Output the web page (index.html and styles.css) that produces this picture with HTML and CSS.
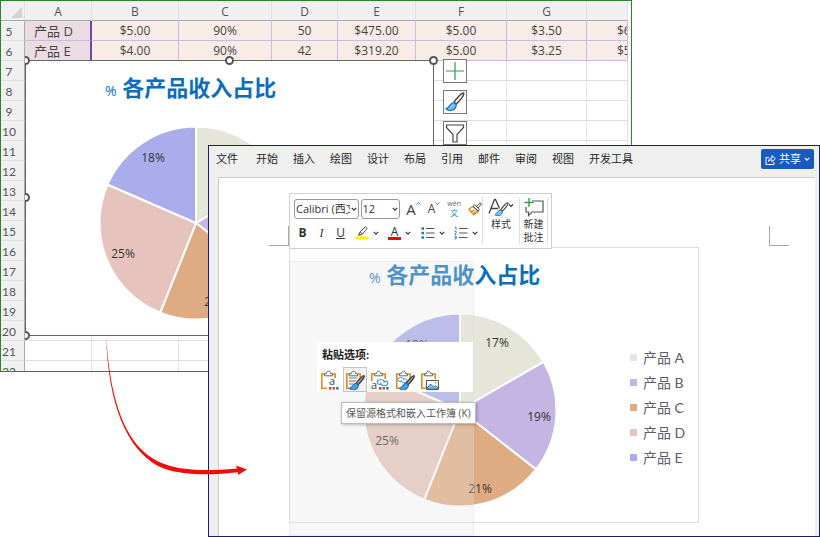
FILE: index.html
```html
<!DOCTYPE html>
<html lang="zh-CN">
<head>
<meta charset="utf-8">
<meta name="viewport" content="width=device-width, initial-scale=1">
<title>各产品收入占比</title>
<link rel="stylesheet" href="styles.css">
</head>
<body>
<svg class="defs" aria-hidden="true">
  <symbol id="chev" viewBox="0 0 6 6"><path d="M.8 1.8 3 4.2 5.2 1.8" fill="none" stroke="#333" stroke-width="1.1"/></symbol>
  <symbol id="brush" viewBox="0 0 18 18">
    <path d="M16.800 1c-1.400-.6-6.600 4.800-8.600 8.200l1.800 1.700c3.300-3 8-8.700 6.800-9.900z" fill="#fff" stroke="#444" stroke-width="1.300"/>
    <path d="M8 9.500c-3.200-.2-3.400 3.800-7 5.700 2.600 2.300 8.600 1.800 9.200-3.800z" fill="#83beec" stroke="#1e74bd" stroke-width="1.200"/>
  </symbol>
  <symbol id="brushfill" viewBox="0 0 18 18">
    <path d="M17 .8c-1.400-.6-6.800 5-8.800 8.400l2 1.900c3.300-3 8-9 6.800-10.300z" fill="#999" stroke="#3a3a3a" stroke-width="1.400"/>
    <path d="M8 9.300c-3.400-.2-3.400 4-7.200 5.900 2.600 2.500 9.200 2 9.800-3.600z" fill="#4aa0e0" stroke="#1e74bd" stroke-width="1.200"/>
  </symbol>
  <symbol id="clip" viewBox="0 0 18 20">
    <path d="M4 4H1.800v14.200H7M13 4h2.200v5" fill="none" stroke="#e08a1e" stroke-width="1.600"/>
    <path d="M4.500 5.800V3.600h2C6.500 .4 10.500 .4 10.500 3.600h2v2.200z" fill="#fff" stroke="#666" stroke-width="1"/>
  </symbol>
  <symbol id="link" viewBox="0 0 14 9">
    <path d="M6 6.500H3.800a2.500 2.500 0 0 1 0-5h2.400a2.500 2.500 0 0 1 2.300 3.400M8 3h2.200a2.400 2.400 0 0 1 0 4.800H7.800a2.400 2.400 0 0 1-2.300-3.300" fill="none" stroke="#3d97d3" stroke-width="1.200"/>
  </symbol>
  <symbol id="dots" viewBox="0 0 10 3">
    <path d="M0 0h2.400v2.600H0z" fill="#d83b2a"/><path d="M3.600 0H6v2.600H3.600z" fill="#e0461f"/><path d="M7.200 0h2.400v2.600H7.200z" fill="#1e74bd"/>
  </symbol>
  <symbol id="slices" viewBox="-98 -98 196 196">
    <g stroke="#fff" stroke-width="2" stroke-linejoin="round">
      <path d="M0 0V-96.500A96.500 96.500 0 0 1 83.600-48.200Z" fill="#e6e5d9"/>
      <path d="M0 0 83.600-48.200A96.500 96.500 0 0 1 76 59.400Z" fill="#c4b5e3"/>
      <path d="M0 0 76 59.400A96.500 96.500 0 0 1-35.800 89.600Z" fill="#dfab83"/>
      <path d="M0 0-35.800 89.600A96.500 96.500 0 0 1-88.500-38.500Z" fill="#e6c4bd"/>
      <path d="M0 0-88.500-38.500A96.500 96.500 0 0 1 0-96.500Z" fill="#aaaceb"/>
    </g>
  </symbol>
</svg>

<main class="desktop">
  <section class="excel" aria-label="工作表">
    <table class="grid">
      <colgroup><col class="c-num"><col class="c-a"><col class="c-b"><col class="c-c"><col class="c-d"><col class="c-e"><col class="c-f"><col class="c-g"><col></colgroup>
      <thead>
        <tr><th class="corner"><svg width="11" height="11" viewBox="0 0 11 11"><path d="M11 0v11H0z" fill="#d2d2d2"/></svg></th><th>A</th><th>B</th><th>C</th><th>D</th><th>E</th><th>F</th><th>G</th><th></th></tr>
      </thead>
      <tbody>
        <tr class="data"><th>5</th><td class="name">产品 D</td><td>$5.00</td><td>90%</td><td>50</td><td>$475.00</td><td>$5.00</td><td>$3.50</td><td class="cut">$665.00</td></tr>
        <tr class="data"><th>6</th><td class="name last">产品 E</td><td>$4.00</td><td>90%</td><td>42</td><td>$319.20</td><td>$5.00</td><td>$3.25</td><td class="cut">$518.70</td></tr>
        <tr><th>7</th><td></td><td></td><td></td><td></td><td></td><td></td><td></td><td></td></tr>
        <tr><th>8</th><td></td><td></td><td></td><td></td><td></td><td></td><td></td><td></td></tr>
        <tr><th>9</th><td></td><td></td><td></td><td></td><td></td><td></td><td></td><td></td></tr>
        <tr><th>10</th><td></td><td></td><td></td><td></td><td></td><td></td><td></td><td></td></tr>
        <tr><th>11</th><td></td><td></td><td></td><td></td><td></td><td></td><td></td><td></td></tr>
        <tr><th>12</th><td></td><td></td><td></td><td></td><td></td><td></td><td></td><td></td></tr>
        <tr><th>13</th><td></td><td></td><td></td><td></td><td></td><td></td><td></td><td></td></tr>
        <tr><th>14</th><td></td><td></td><td></td><td></td><td></td><td></td><td></td><td></td></tr>
        <tr><th>15</th><td></td><td></td><td></td><td></td><td></td><td></td><td></td><td></td></tr>
        <tr><th>16</th><td></td><td></td><td></td><td></td><td></td><td></td><td></td><td></td></tr>
        <tr><th>17</th><td></td><td></td><td></td><td></td><td></td><td></td><td></td><td></td></tr>
        <tr><th>18</th><td></td><td></td><td></td><td></td><td></td><td></td><td></td><td></td></tr>
        <tr><th>19</th><td></td><td></td><td></td><td></td><td></td><td></td><td></td><td></td></tr>
        <tr><th>20</th><td></td><td></td><td></td><td></td><td></td><td></td><td></td><td></td></tr>
        <tr><th>21</th><td></td><td></td><td></td><td></td><td></td><td></td><td></td><td></td></tr>
        <tr><th>22</th><td></td><td></td><td></td><td></td><td></td><td></td><td></td><td></td></tr>
      </tbody>
    </table>

    <div class="objects">
      <div class="selected-chart">
        <figure class="chart">
          <figcaption><span class="pct">%</span> 各产品收入占比</figcaption>
          <svg class="pie" width="196" height="196" viewBox="-98 -98 196 196">
            <use href="#slices" x="-98" y="-98" width="196" height="196"/>
            <text x="-43" y="-61">18%</text><text x="-73" y="35">25%</text><text x="20" y="83">21%</text>
          </svg>
        </figure>
        <i class="handle tl"></i><i class="handle tm"></i><i class="handle tr"></i><i class="handle ml"></i><i class="handle bl"></i>
        <div class="side">
          <button type="button" aria-label="图表元素"><svg width="20" height="20" viewBox="0 0 20 20"><path d="M10 1v18M1 10h18" stroke="#2e9e57" stroke-width="1.200"/></svg></button>
          <button type="button" aria-label="图表样式"><svg width="20" height="20"><use href="#brush"/></svg></button>
          <button type="button" aria-label="图表筛选器"><svg width="20" height="20" viewBox="0 0 20 20"><path d="M1.500 2h17v2.500L12 11.500V19H8v-7.500L1.500 4.500z" fill="none" stroke="#444" stroke-width="1.200"/></svg></button>
        </div>
      </div>
    </div>
  </section>

  <section class="word" aria-label="文档">
    <nav class="tabs">
      <a href="#" class="file">文件</a><a href="#">开始</a><a href="#">插入</a><a href="#">绘图</a><a href="#">设计</a><a href="#">布局</a><a href="#">引用</a><a href="#">邮件</a><a href="#">审阅</a><a href="#">视图</a><a href="#">开发工具</a>
      <button type="button" class="share">
        <svg width="11" height="11" viewBox="0 0 11 11"><path d="M4 3.500H1v7h8V8M3.500 7.500C3.800 5 5 4 7 4V1.500L10.300 4.800 7 8V5.800C5.500 5.800 4.500 6.300 3.500 7.500z" fill="none" stroke="#fff"/></svg>
        共享
        <svg width="6" height="6" viewBox="0 0 6 6"><path d="M.8 1.800 3 4.200 5.200 1.800" fill="none" stroke="#fff" stroke-width="1.200"/></svg>
      </button>
    </nav>
    <div class="canvas">
      <article class="page">
        <i class="mark mark-l"></i><i class="mark mark-r"></i>
        <figure class="chart framed">
          <figcaption><span class="pct">%</span> 各产品收入占比</figcaption>
          <div class="plot">
            <svg class="pie" width="196" height="196" viewBox="-98 -98 196 196">
              <use href="#slices" x="-98" y="-98" width="196" height="196"/>
              <text x="37" y="-63">17%</text><text x="79" y="11">19%</text><text x="20" y="83">21%</text><text x="-73" y="35">25%</text><text x="-43" y="-61">18%</text>
            </svg>
            <ul class="legend"><li class="a">产品 A</li><li class="b">产品 B</li><li class="c">产品 C</li><li class="d">产品 D</li><li class="e">产品 E</li></ul>
          </div>
        </figure>
        <div class="veil"></div>

        <div class="mini" role="toolbar" aria-label="浮动工具栏">
          <div class="format">
            <div class="line">
              <span class="combo font"><select aria-label="字体"><option>Calibri (西文正文)</option></select><svg width="6" height="6"><use href="#chev"/></svg></span>
              <span class="combo size"><select aria-label="字号"><option>12</option></select><svg width="6" height="6"><use href="#chev"/></svg></span>
              <div class="tools">
                <button type="button" class="grow" aria-label="增大字号">A<svg width="5" height="5" viewBox="0 0 5 5"><path d="M.5 3.500l2-2 2 2" fill="none" stroke="#2b88d0"/></svg></button>
                <button type="button" class="grow small" aria-label="减小字号">A<svg width="5" height="5" viewBox="0 0 5 5"><path d="M.5 1.500l2 2 2-2" fill="none" stroke="#2b88d0"/></svg></button>
                <button type="button" class="wen" aria-label="拼音指南"><span>wén</span><span class="zh">文</span></button>
                <button type="button" aria-label="格式刷"><svg width="14" height="14" viewBox="0 0 14 14"><path d="M5 4.500.800 7.200 5.800 13l4.400-3.600z" fill="#fff" stroke="#e0831c" stroke-width="1.200"/><path d="M3 9.500l3.500-1.200M4.800 11.500l3.800-2" stroke="#e0831c" stroke-width="1.400"/><path d="M5.200 4.200l1.600-1.500 4.600 4.900-1.400 1.500zM8.500 4.300l3.600-3.600 1.300 1.300-3.300 3.900z" fill="#fff" stroke="#444"/></svg></button>
              </div>
            </div>
            <div class="line second">
              <button type="button" class="ch bold" aria-label="加粗">B</button>
              <button type="button" class="ch ital" aria-label="倾斜">I</button>
              <button type="button" class="ch under" aria-label="下划线">U</button>
              <button type="button" class="drop" aria-label="突出显示"><svg width="14" height="14" viewBox="0 0 14 14"><path d="M3.500 9 5 5.800 10.500 .8l1.700 1.500L7.500 8zM5 5.800 7.500 8M3.500 9l2.500-.300" fill="#fff" stroke="#555"/><path d="M.5 10.500h13V13.500H.5z" fill="#fff200"/></svg><svg width="6" height="6"><use href="#chev"/></svg></button>
              <button type="button" class="drop" aria-label="字体颜色"><span class="fc">A</span><svg width="6" height="6"><use href="#chev"/></svg></button>
              <button type="button" class="drop" aria-label="项目符号"><svg width="14" height="14" viewBox="0 0 14 14"><path d="M5 2.500h8.500M5 7h8.500M5 11.500h8.500" stroke="#555"/><path d="M.5 1.200h2.500v2.500H.5zM.5 5.700h2.500v2.500H.5zM.5 10.200h2.500v2.500H.5z" fill="#1e74bd"/></svg><svg width="6" height="6"><use href="#chev"/></svg></button>
              <button type="button" class="drop" aria-label="编号"><svg width="14" height="14" viewBox="0 0 14 14"><path d="M5 2.500h8.500M5 7h8.500M5 11.500h8.500" stroke="#555"/><path d="M1 1.200h1v2.800M.6 5.500h1.600v1.200l-1.400 1.500h1.600M.6 10h1.600v3H.6M1 11.500h1.200" fill="none" stroke="#1e74bd" stroke-width=".9"/></svg><svg width="6" height="6"><use href="#chev"/></svg></button>
            </div>
          </div>
          <button type="button" class="big styles"><svg width="26" height="20" viewBox="0 0 26 20"><path d="M1 15.500 6.500 1.500h1l4 9M3 10.500H10" fill="none" stroke="#444" stroke-width="1.300"/><use href="#brush" x="6" y="4" width="15" height="15"/><path d="M21 6.500l2 2 2-2" fill="none" stroke="#333" stroke-width="1.100"/></svg>样式</button>
          <button type="button" class="big note"><svg width="20" height="20" viewBox="0 0 20 20"><path d="M8 3h11v11H8l-3.500 3.500V14H2V9" fill="none" stroke="#555" stroke-width="1.200"/><path d="M5 0v9M.5 4.500h9" stroke="#27a348" stroke-width="1.400"/></svg>新建<br>批注</button>
        </div>

        <div class="paste" role="menu">
          <strong>粘贴选项:</strong>
          <div class="choices">
            <button type="button" aria-label="使用目标主题和嵌入工作簿"><svg width="20" height="20" viewBox="0 0 20 20"><use href="#clip" width="18" height="20"/><path d="M8 8h12v12H8z" fill="#fff"/><text x="9" y="15" class="ia">a</text><use href="#dots" x="9" y="17" width="10" height="3"/></svg></button>
            <button type="button" class="on" aria-label="保留源格式和嵌入工作簿"><svg width="20" height="20" viewBox="0 0 20 20"><use href="#clip" width="18" height="20"/><path d="M4 8h8M4 14h4" stroke="#3d97d3"/><path d="M4 11h7" stroke="#e0461f"/><use href="#brushfill" x="4" y="5" width="16" height="16"/></svg></button>
            <button type="button" aria-label="使用目标主题和链接数据"><svg width="20" height="20" viewBox="0 0 20 20"><use href="#clip" width="18" height="20"/><path d="M0 11h20v9H0z" fill="#fff"/><use href="#link" x="6" y="8" width="13" height="9"/><text x="1" y="19" class="ia">a</text><use href="#dots" x="9" y="17" width="10" height="3"/></svg></button>
            <button type="button" aria-label="保留源格式和链接数据"><svg width="20" height="20" viewBox="0 0 20 20"><use href="#clip" width="18" height="20"/><use href="#link" x="2" y="6" width="11" height="8"/><use href="#brushfill" x="4" y="5" width="16" height="16"/></svg></button>
            <button type="button" aria-label="图片"><svg width="20" height="20" viewBox="0 0 20 20"><use href="#clip" width="18" height="20"/><path d="M6.500 10.500h12v9h-12z" fill="#fff" stroke="#555"/><path d="M7 18l3.500-4 3 3 2-1.500 2.500 2.500v1H7z" fill="#83beec" stroke="#1e74bd"/><path d="M15 12h1.500v1.500H15z" fill="#e08a1e"/></svg></button>
          </div>
          <span class="tip" role="tooltip">保留源格式和嵌入工作簿 (K)</span>
        </div>
      </article>
    </div>
  </section>

  <svg class="arrow" width="260" height="490" viewBox="0 0 260 490" aria-hidden="true"><path d="M106 335C109 385 119 427 141 449C160 468 186 473 237 468.500L236 465.500 247 469.500 238 475V472.300C206 476 176 475 158 466C127 449 108 405 106 335Z" fill="#f10b0b"/></svg>
</main>
</body>
</html>
```

FILE: styles.css
```css
* { box-sizing: border-box; }

body {
  margin: 0;
  background: #fff;
  color: #333;
  font-family: "Open Sans", "Noto Sans CJK SC", sans-serif;
  font-size: 11px;
  line-height: 16px;
}

button {
  margin: 0;
  padding: 0;
  border: 0;
  background: none;
  color: inherit;
  font: inherit;
}

svg { display: block; flex: none; }
.defs { position: absolute; width: 0; height: 0; }
figure, ul { margin: 0; padding: 0; }

/* Two overlapping windows */
.desktop {
  position: relative;
  display: grid;
  grid-template: 145px minmax(227px, 1fr) 165px / 208px minmax(0, 1fr) 188px;
  height: 100vh;
  min-height: 537px;
}

.excel {
  grid-area: 1 / 1 / 3 / 3;
  position: relative;
  overflow: hidden;
  padding-right: 3px;
  border: 1px solid #2d822d;
  background: #fff;
}

.word {
  grid-area: 2 / 2 / 4 / 4;
  position: relative;
  display: flex;
  flex-direction: column;
  border: 1px solid #1b1b7c;
  background: #efeff0;
}

/* Worksheet */
.grid {
  width: 100%;
  table-layout: fixed;
  border-collapse: separate;
  border-spacing: 0;
  font-size: 12px;
}
.c-num { width: 24px; }
.c-a { width: 67px; }
.c-b { width: 87px; }
.c-c { width: 93px; }
.c-d { width: 66px; }
.c-e { width: 78px; }
.c-f { width: 91px; }
.c-g { width: 80px; }

.grid th, .grid td {
  height: 20px;
  padding: 0;
  overflow: hidden;
  border-right: 1px solid #e2e2e2;
  border-bottom: 1px solid #dedede;
  line-height: 16px;
  text-align: center;
  white-space: nowrap;
}
.grid th {
  background: #f0f0f0;
  color: #555;
  font-weight: 400;
}
.grid thead th {
  padding-top: 3px;
  border-bottom-color: #aaa;
}
.grid tbody th {
  padding: 3px 7px 0 0;
  border-right-color: #aaa;
  font-family: Lato, sans-serif;
}
.grid .corner { padding: 3px 0 0 10px; }
.grid .data td {
  border-color: #cdb8e0;
  background: #f8ede6;
  color: #444;
}
.grid .data .name {
  padding-left: 9px;
  border-right: 2px solid #7048a0;
  background: #ebdce3;
  font-size: 13px;
  text-align: left;
}
.grid .data .cut { padding-left: 30px; text-align: left; text-overflow: clip; }

.objects {
  position: absolute;
  inset: 0 0 0 24px;
  overflow: hidden;
}
.selected-chart {
  position: absolute;
  top: 59px;
  left: 0;
  border: 1px solid #666;
  background: #fff;
}
.handle {
  position: absolute;
  width: 9px;
  height: 9px;
  border: 2px solid #555;
  border-radius: 50%;
  background: #fff;
}
.tl, .tm, .tr { top: -5px; }
.tl, .ml, .bl { left: -5px; }
.tm { left: calc(50% - 5px); }
.tr { right: -5px; }
.ml { top: calc(50% - 5px); }
.bl { bottom: -5px; }

.side {
  position: absolute;
  top: -2px;
  left: calc(100% + 10px);
  display: grid;
  gap: 7px;
}
.side button {
  display: grid;
  place-items: center;
  width: 24px;
  height: 24px;
  border: 1px solid #777;
  background: #fff;
}

/* Pie chart shared by both windows */
.chart {
  width: 407px;
  height: 274px;
}
.chart figcaption {
  padding: 10px 0 0 79px;
  color: #0a6ebd;
  font-size: 22px;
  font-weight: 700;
  line-height: 32px;
  white-space: nowrap;
}
.chart .pct {
  font-size: 14px;
  font-weight: 400;
}
.pie { margin: 18px 0 0 72px; }
.pie text {
  fill: #333;
  font-size: 12px;
  text-anchor: middle;
}
.framed { width: 410px; height: 276px; border: 1px solid #ddd; }
.plot { display: flex; }
.legend {
  margin: 51px 0 0 72px;
  list-style: none;
  color: #5e5a6c;
  font-family: Lato, "Noto Sans CJK SC", sans-serif;
  font-size: 14px;
  font-weight: 400;
  line-height: 25px;
}
.legend li {
  display: flex;
  align-items: center;
  gap: 6px;
  white-space: nowrap;
}
.legend li::before {
  content: "";
  width: 7px;
  height: 7px;
  background: currentColor;
}
.legend .a::before { background: #e6e5d9; }
.legend .b::before { background: #c4b5e3; }
.legend .c::before { background: #dfab83; }
.legend .d::before { background: #e6c4bd; }
.legend .e::before { background: #aaaceb; }

/* Document window */
.tabs {
  display: flex;
  align-items: flex-start;
  gap: 15px;
  height: 31px;
  padding: 3px 5px 0 7px;
  white-space: nowrap;
}
.tabs a {
  padding-top: 2px;
  color: #262626;
  text-decoration: none;
}
.tabs .file { margin-right: 3px; }
.share {
  display: flex;
  align-items: center;
  gap: 3px;
  height: 20px;
  margin-left: auto;
  padding: 0 4px;
  border-radius: 2px;
  background: #185abd;
  color: #fff;
}
.canvas {
  flex: 1;
  display: flex;
  min-height: 0;
  padding: 0 4px 0 9px;
}
.page {
  position: relative;
  flex: 1;
  padding: 69px 0 0 70px;
  border: solid #cdcdcd;
  border-width: 1px 0 0 1px;
  background: #fff;
}
.mark {
  position: absolute;
  top: 48px;
  width: 20px;
  height: 20px;
  border: solid #aaa;
}
.mark-l { left: 50px; border-width: 0 1px 1px 0; }
.mark-r { right: 26px; border-width: 0 0 1px 1px; }
.veil {
  position: absolute;
  top: 83px;
  bottom: 0;
  left: 70px;
  width: 185px;
  border: 1px solid rgba(200, 200, 200, .2);
  background: rgba(229, 229, 229, .31);
}

/* Mini toolbar */
.mini {
  position: absolute;
  top: 15px;
  left: 70px;
  display: flex;
  padding: 4px 3px;
  border: 1px solid #cfcfcf;
  background: #fff;
}
.format { width: 190px; padding-left: 1px; border-right: 1px solid #ddd; }
.line { display: flex; align-items: center; height: 21px; gap: 2px; }
.combo {
  position: relative;
  display: flex;
  height: 20px;
}
.font { width: 65px; }
.size { width: 40px; }
.combo select {
  width: 100%;
  padding: 0 8px 0 1px;
  appearance: none;
  border: 1px solid #999;
  border-radius: 3px;
  background: #fff;
  color: #333;
  font: inherit;
}
.combo svg { position: absolute; top: 7px; right: 2px; }
.tools { display: flex; align-items: center; gap: 7px; padding-left: 4px; }
.grow { display: flex; color: #444; font-size: 15px; line-height: 16px; }
.grow.small { font-size: 12px; }
.wen { display: grid; justify-items: center; color: #666; font-size: 7px; line-height: 8px; }
.wen .zh { color: #2b88d0; font-size: 8px; line-height: 10px; }
.second { gap: 10px; margin-top: 3px; padding-left: 4px; }
.ch { width: 9px; font-size: 12px; }
.bold { font-weight: 700; }
.ital { font-family: "Liberation Serif", serif; font-style: italic; }
.under { text-decoration: underline; }
.drop { display: flex; align-items: center; gap: 4px; width: 23px; }
.fc {
  width: 13px;
  height: 14px;
  border-bottom: 3px solid #e30b0b;
  font-size: 12px;
  line-height: 11px;
}
.big {
  display: grid;
  justify-items: center;
  align-content: start;
  font-size: 10px;
  line-height: 13px;
}
.styles { width: 37px; border-right: 1px solid #ddd; }
.note { width: 28px; border-right: 1px solid #ddd; }

/* Paste options */
.paste {
  position: absolute;
  top: 164px;
  left: 98px;
  width: 156px;
  padding: 5px 0 0;
  background: #fff;
}
.paste strong { display: block; padding-left: 5px; color: #222; }
.choices { display: flex; gap: 1px; padding: 4px 0 0 1px; }
.choices button {
  display: grid;
  place-items: center;
  width: 24px;
  height: 25px;
  border: 1px solid transparent;
}
.choices .on { border-color: #c4c4c4; background: #f3f3f3; }
.ia { fill: #444; font-size: 11px; }
.tip {
  position: absolute;
  top: 60px;
  left: 24px;
  padding: 2px 4px;
  border: 1px solid #bdbdbd;
  background: #fff;
  box-shadow: 1px 1px 3px rgba(0, 0, 0, .25);
  color: #555;
  font-size: 10px;
  white-space: nowrap;
}

.arrow {
  position: absolute;
  top: 0;
  left: 0;
  pointer-events: none;
}
```
